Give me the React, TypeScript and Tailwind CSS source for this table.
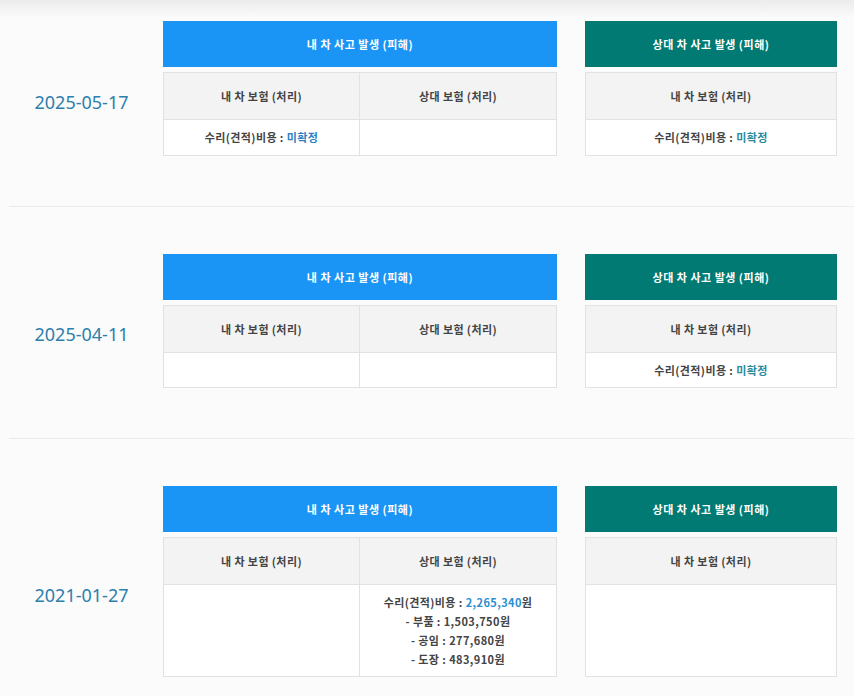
import React from "react";

const font = { fontFamily: '"Noto Sans CJK KR", "Noto Sans", sans-serif' };

function Cost({ value, color }: { value: string; color: string }) {
  return (
    <div>
      수리(견적)비용 : <span className={color}>{value}</span>
    </div>
  );
}

type Section = {
  date: string;
  pt: string;
  myOwn: React.ReactNode;
  other: React.ReactNode;
  green: React.ReactNode;
  bodyH: string;
};

const cellText = "text-[11px] font-semibold text-[#444] tracking-[0.4px]";
const headText = "text-white text-[11px] font-semibold tracking-[0.5px]";

function Row({ s, last }: { s: Section; last?: boolean }) {
  return (
    <div className={`${s.pt} pb-[50px] ${last ? "" : "border-b border-[#ebebeb] ml-[9px]"}`}>
      <div className={`flex items-stretch ${last ? "" : "-ml-[9px]"}`}>
        <div className="w-[163px] shrink-0 flex items-center justify-center pt-[26px]">
          <span
            className="text-[18px] text-[#2d7fad] leading-none"
            style={{ fontFamily: '"Noto Sans", "Noto Sans CJK KR", sans-serif' }}
          >
            {s.date}
          </span>
        </div>
        <div className="w-[394px] shrink-0">
          <div className={`h-[46px] bg-[#1a95f5] ${headText} flex items-center justify-center`}>
            내 차 사고 발생 (피해)
          </div>
          <div className="mt-[5px] border border-[#e2e2e2] bg-white">
            <div className={`grid grid-cols-2 h-[47px] bg-[#f3f3f3] border-b border-[#e2e2e2] ${cellText}`}>
              <div className="flex items-center justify-center border-r border-[#e2e2e2]">내 차 보험 (처리)</div>
              <div className="flex items-center justify-center">상대 보험 (처리)</div>
            </div>
            <div className={`grid grid-cols-2 ${s.bodyH} ${cellText}`}>
              <div className="flex items-center justify-center border-r border-[#e2e2e2] text-center leading-[19px]">
                {s.myOwn}
              </div>
              <div className="flex items-center justify-center text-center leading-[19px]">{s.other}</div>
            </div>
          </div>
        </div>
        <div className="w-[28px] shrink-0" />
        <div className="w-[252px] shrink-0">
          <div className={`h-[46px] bg-[#007a72] ${headText} flex items-center justify-center`}>
            상대 차 사고 발생 (피해)
          </div>
          <div className="mt-[5px] border border-[#e2e2e2] bg-white">
            <div className={`h-[47px] bg-[#f3f3f3] border-b border-[#e2e2e2] ${cellText} flex items-center justify-center`}>
              내 차 보험 (처리)
            </div>
            <div className={`${s.bodyH} ${cellText} flex items-center justify-center`}>{s.green}</div>
          </div>
        </div>
      </div>
    </div>
  );
}

export default function App() {
  const sections: Section[] = [
    {
      date: "2025-05-17",
      pt: "pt-[21px]",
      myOwn: <Cost value="미확정" color="text-[#2b7fc2]" />,
      other: null,
      green: <Cost value="미확정" color="text-[#2a8a9c]" />,
      bodyH: "h-[35px]",
    },
    {
      date: "2025-04-11",
      pt: "pt-[47px]",
      myOwn: null,
      other: null,
      green: <Cost value="미확정" color="text-[#2a8a9c]" />,
      bodyH: "h-[34px]",
    },
    {
      date: "2021-01-27",
      pt: "pt-[47px]",
      myOwn: null,
      other: (
        <div>
          <div>
            수리(견적)비용 : <span className="text-[#2b8fd2]">2,265,340</span>원
          </div>
          <div>- 부품 : 1,503,750원</div>
          <div>- 공임 : 277,680원</div>
          <div>- 도장 : 483,910원</div>
        </div>
      ),
      green: null,
      bodyH: "h-[91px]",
    },
  ];
  return (
    <div
      className="min-h-[696px] w-[854px] bg-[linear-gradient(to_bottom,#ececec_0px,#fbfbfb_18px,#fbfbfb_100%)] overflow-hidden"
      style={font}
    >
      {sections.map((s, i) => (
        <Row key={s.date} s={s} last={i === sections.length - 1} />
      ))}
    </div>
  );
}
